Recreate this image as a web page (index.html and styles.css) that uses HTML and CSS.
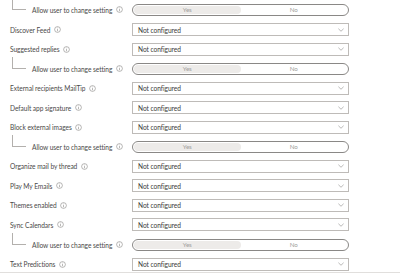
FILE: index.html
```html
<!DOCTYPE html>
<html lang="en">
<head>
    <meta charset="UTF-8">
    <title>Outlook settings</title>
    <link rel="stylesheet" href="styles.css">
</head>
<body>
    <div class="settings">
        <div class="row sub">
            <span class="tree"></span>
            <span class="label">Allow user to change setting <svg class="info" viewBox="0 0 8 8"><circle cx="4" cy="4" r="3.3"/><line x1="4" y1="3.5" x2="4" y2="6"/><circle class="dot" cx="4" cy="2.2" r="0.4"/></svg></span>
            <div class="toggle"><span class="on">Yes</span><span>No</span></div>
        </div>
        <div class="row">
            <span class="label">Discover Feed <svg class="info" viewBox="0 0 8 8"><circle cx="4" cy="4" r="3.3"/><line x1="4" y1="3.5" x2="4" y2="6"/><circle class="dot" cx="4" cy="2.2" r="0.4"/></svg></span>
            <div class="select"><span>Not configured</span><svg class="chev" viewBox="0 0 8 5"><polyline points="0.5,0.8 4,4.2 7.5,0.8"/></svg></div>
        </div>
        <div class="row">
            <span class="label">Suggested replies <svg class="info" viewBox="0 0 8 8"><circle cx="4" cy="4" r="3.3"/><line x1="4" y1="3.5" x2="4" y2="6"/><circle class="dot" cx="4" cy="2.2" r="0.4"/></svg></span>
            <div class="select"><span>Not configured</span><svg class="chev" viewBox="0 0 8 5"><polyline points="0.5,0.8 4,4.2 7.5,0.8"/></svg></div>
        </div>
        <div class="row sub">
            <span class="tree"></span>
            <span class="label">Allow user to change setting <svg class="info" viewBox="0 0 8 8"><circle cx="4" cy="4" r="3.3"/><line x1="4" y1="3.5" x2="4" y2="6"/><circle class="dot" cx="4" cy="2.2" r="0.4"/></svg></span>
            <div class="toggle"><span class="on">Yes</span><span>No</span></div>
        </div>
        <div class="row">
            <span class="label">External recipients MailTip <svg class="info" viewBox="0 0 8 8"><circle cx="4" cy="4" r="3.3"/><line x1="4" y1="3.5" x2="4" y2="6"/><circle class="dot" cx="4" cy="2.2" r="0.4"/></svg></span>
            <div class="select"><span>Not configured</span><svg class="chev" viewBox="0 0 8 5"><polyline points="0.5,0.8 4,4.2 7.5,0.8"/></svg></div>
        </div>
        <div class="row">
            <span class="label">Default app signature <svg class="info" viewBox="0 0 8 8"><circle cx="4" cy="4" r="3.3"/><line x1="4" y1="3.5" x2="4" y2="6"/><circle class="dot" cx="4" cy="2.2" r="0.4"/></svg></span>
            <div class="select"><span>Not configured</span><svg class="chev" viewBox="0 0 8 5"><polyline points="0.5,0.8 4,4.2 7.5,0.8"/></svg></div>
        </div>
        <div class="row">
            <span class="label">Block external images <svg class="info" viewBox="0 0 8 8"><circle cx="4" cy="4" r="3.3"/><line x1="4" y1="3.5" x2="4" y2="6"/><circle class="dot" cx="4" cy="2.2" r="0.4"/></svg></span>
            <div class="select"><span>Not configured</span><svg class="chev" viewBox="0 0 8 5"><polyline points="0.5,0.8 4,4.2 7.5,0.8"/></svg></div>
        </div>
        <div class="row sub">
            <span class="tree"></span>
            <span class="label">Allow user to change setting <svg class="info" viewBox="0 0 8 8"><circle cx="4" cy="4" r="3.3"/><line x1="4" y1="3.5" x2="4" y2="6"/><circle class="dot" cx="4" cy="2.2" r="0.4"/></svg></span>
            <div class="toggle"><span class="on">Yes</span><span>No</span></div>
        </div>
        <div class="row">
            <span class="label">Organize mail by thread <svg class="info" viewBox="0 0 8 8"><circle cx="4" cy="4" r="3.3"/><line x1="4" y1="3.5" x2="4" y2="6"/><circle class="dot" cx="4" cy="2.2" r="0.4"/></svg></span>
            <div class="select"><span>Not configured</span><svg class="chev" viewBox="0 0 8 5"><polyline points="0.5,0.8 4,4.2 7.5,0.8"/></svg></div>
        </div>
        <div class="row">
            <span class="label">Play My Emails <svg class="info" viewBox="0 0 8 8"><circle cx="4" cy="4" r="3.3"/><line x1="4" y1="3.5" x2="4" y2="6"/><circle class="dot" cx="4" cy="2.2" r="0.4"/></svg></span>
            <div class="select"><span>Not configured</span><svg class="chev" viewBox="0 0 8 5"><polyline points="0.5,0.8 4,4.2 7.5,0.8"/></svg></div>
        </div>
        <div class="row">
            <span class="label">Themes enabled <svg class="info" viewBox="0 0 8 8"><circle cx="4" cy="4" r="3.3"/><line x1="4" y1="3.5" x2="4" y2="6"/><circle class="dot" cx="4" cy="2.2" r="0.4"/></svg></span>
            <div class="select"><span>Not configured</span><svg class="chev" viewBox="0 0 8 5"><polyline points="0.5,0.8 4,4.2 7.5,0.8"/></svg></div>
        </div>
        <div class="row">
            <span class="label">Sync Calendars <svg class="info" viewBox="0 0 8 8"><circle cx="4" cy="4" r="3.3"/><line x1="4" y1="3.5" x2="4" y2="6"/><circle class="dot" cx="4" cy="2.2" r="0.4"/></svg></span>
            <div class="select"><span>Not configured</span><svg class="chev" viewBox="0 0 8 5"><polyline points="0.5,0.8 4,4.2 7.5,0.8"/></svg></div>
        </div>
        <div class="row sub">
            <span class="tree"></span>
            <span class="label">Allow user to change setting <svg class="info" viewBox="0 0 8 8"><circle cx="4" cy="4" r="3.3"/><line x1="4" y1="3.5" x2="4" y2="6"/><circle class="dot" cx="4" cy="2.2" r="0.4"/></svg></span>
            <div class="toggle"><span class="on">Yes</span><span>No</span></div>
        </div>
        <div class="row">
            <span class="label">Text Predictions <svg class="info" viewBox="0 0 8 8"><circle cx="4" cy="4" r="3.3"/><line x1="4" y1="3.5" x2="4" y2="6"/><circle class="dot" cx="4" cy="2.2" r="0.4"/></svg></span>
            <div class="select"><span>Not configured</span><svg class="chev" viewBox="0 0 8 5"><polyline points="0.5,0.8 4,4.2 7.5,0.8"/></svg></div>
        </div>
        <div class="row sub">
            <span class="tree"></span>
        </div>
    </div>
    <div class="footer-line"></div>
</body>
</html>
```

FILE: styles.css
```css
body {
    margin: 0;
    background: #fff;
    font-family: 'Lato', 'Open Sans', sans-serif;
    font-size: 6.6px;
    letter-spacing: -0.05px;
    color: #4a4948;
    overflow: hidden;
}
.settings {
    padding-top: 0.2px;
}
.row {
    display: flex;
    align-items: center;
    height: 19.55px;
    padding-left: 10px;
}
.label {
    width: 122px;
    flex-shrink: 0;
    display: flex;
    align-items: center;
    white-space: pre;
}
.row.sub {
    padding-left: 12px;
}
.row.sub .label {
    width: 100px;
}
.tree {
    align-self: flex-start;
    width: 14px;
    height: 12px;
    margin-top: -2px;
    margin-right: 6px;
    border-left: 1px solid #b3b0ad;
    border-bottom: 1px solid #b3b0ad;
    flex-shrink: 0;
    box-sizing: border-box;
}
.info {
    width: 7px;
    height: 7px;
    margin-left: 2px;
    fill: none;
    stroke: #8a8886;
    stroke-width: 0.7;
}
.info .dot {
    fill: #8a8886;
    stroke: none;
}
.select {
    width: 217px;
    height: 13px;
    box-sizing: border-box;
    border: 1px solid #bebbb8;
    display: flex;
    align-items: center;
    justify-content: space-between;
    padding: 0 4px 0 5px;
    color: #3b3a39;
}
.chev {
    width: 6px;
    height: 4px;
    fill: none;
    stroke: #8a8886;
    stroke-width: 0.8;
}
.toggle {
    width: 217px;
    height: 12px;
    box-sizing: border-box;
    border: 1px solid #8a8886;
    border-radius: 7px;
    padding: 1px;
    display: flex;
    color: #a19f9d;
    font-size: 6.2px;
}
.toggle span {
    flex: 1;
    display: flex;
    align-items: center;
    justify-content: center;
    border-radius: 5px;
}
.toggle .on {
    background: #edebe9;
}
.footer-line {
    position: fixed;
    left: 0;
    right: 0;
    bottom: 0;
    height: 2px;
    background: #fff;
    border-top: 1px solid #e1dfdd;
}
```
